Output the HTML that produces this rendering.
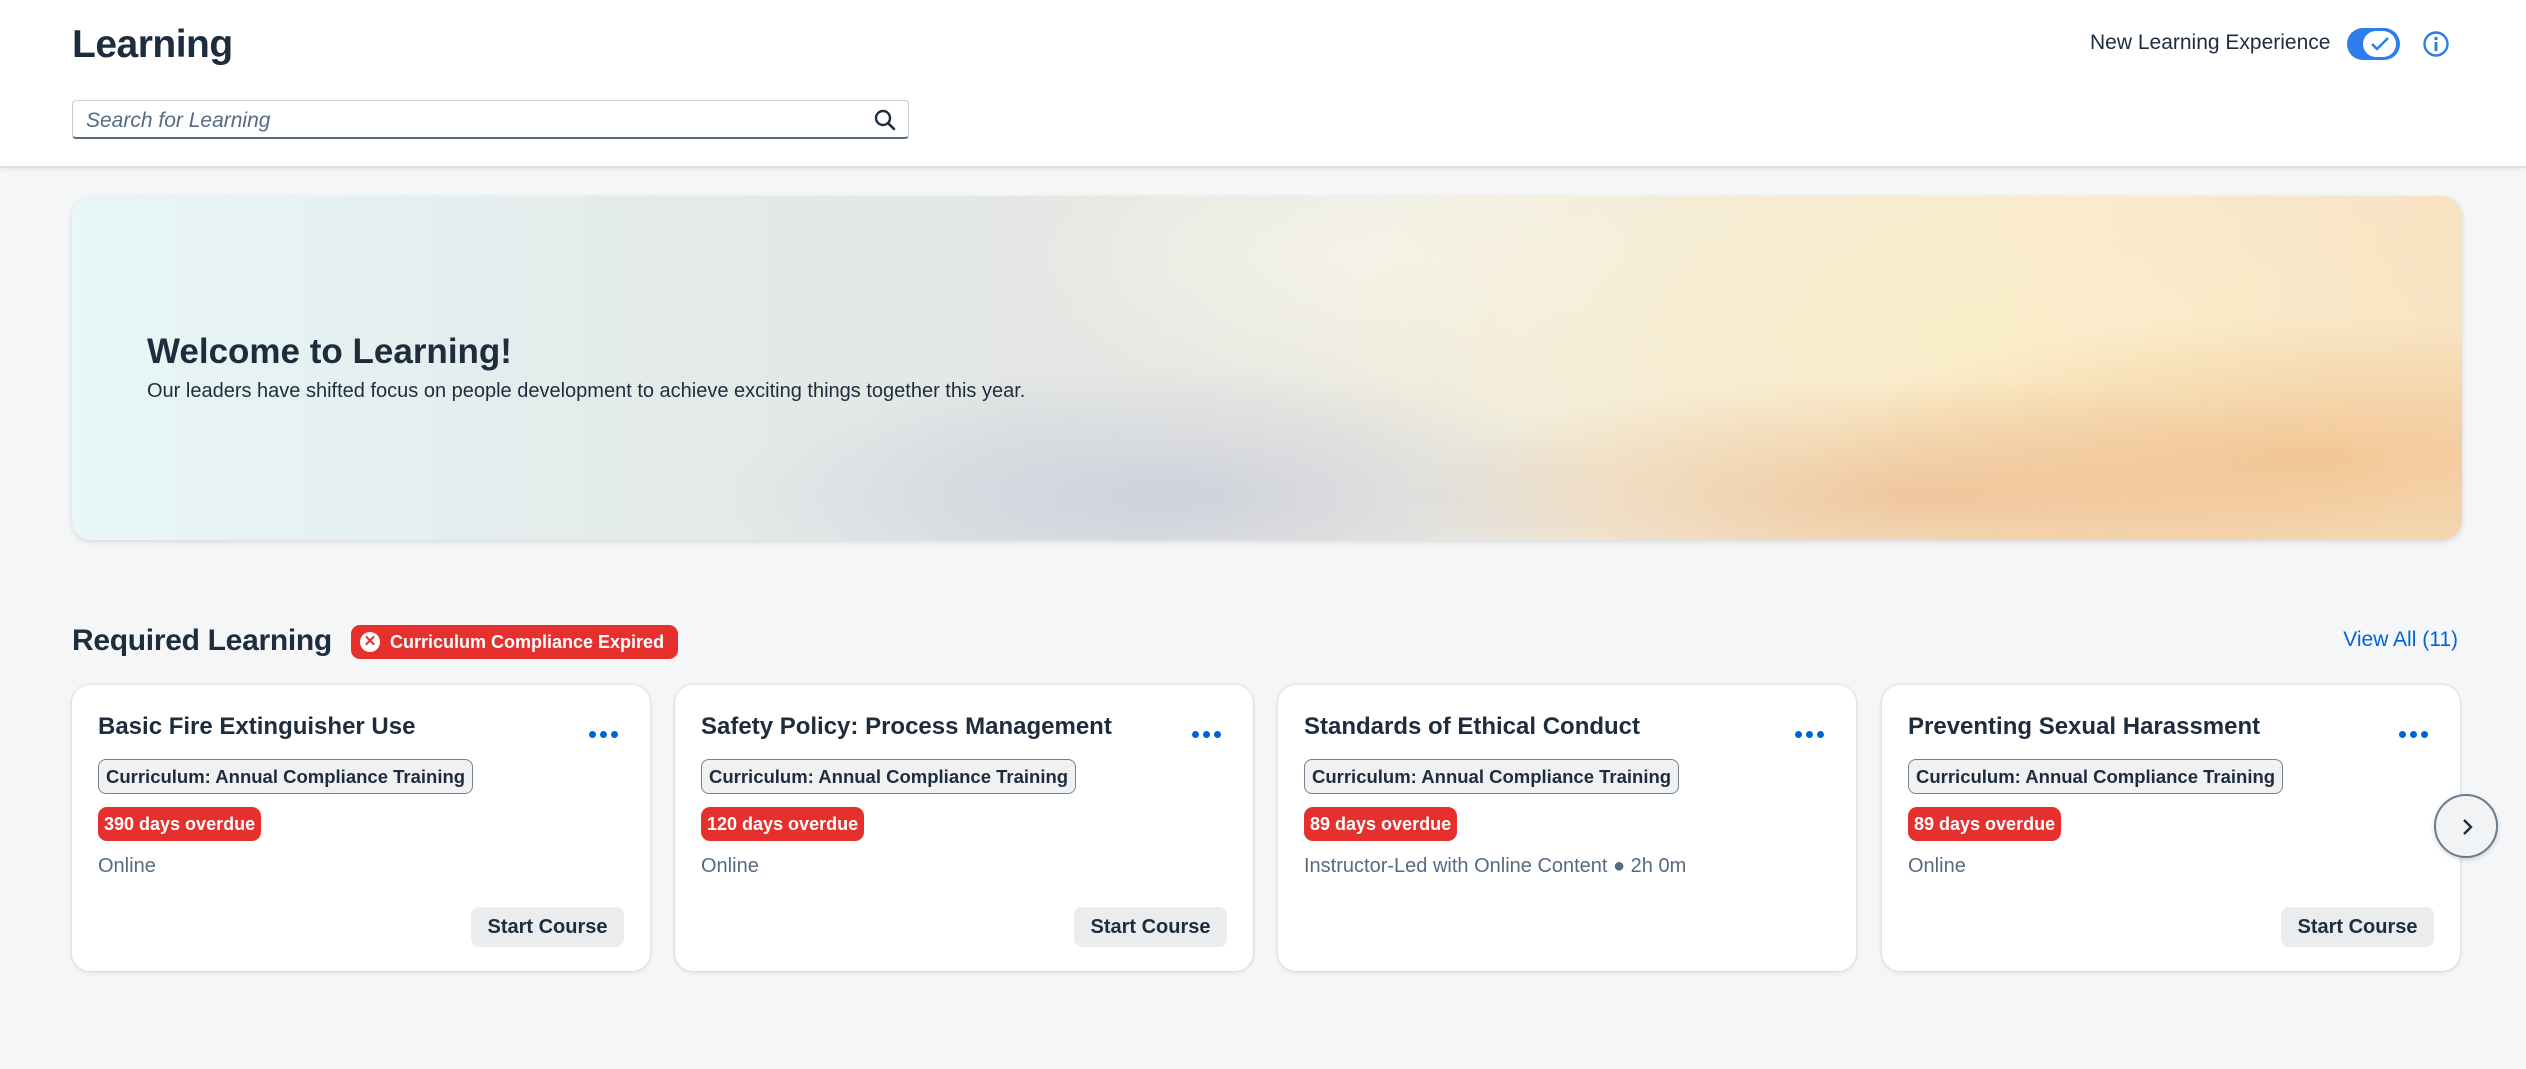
<!DOCTYPE html>
<html><head><meta charset="utf-8"><style>
*{box-sizing:border-box;margin:0;padding:0}
body{width:2526px;height:1069px;background:#f5f6f7;font-family:"Liberation Sans",sans-serif;color:#1d2d3e;position:relative;overflow:hidden}
.hdr{position:absolute;left:0;top:0;width:2526px;height:168px;background:#fff;border-bottom:2px solid #dfe1e3;box-shadow:0 2px 4px rgba(0,0,0,.05)}
.abs{position:absolute}
.title{left:72px;top:23px;font-size:39px;font-weight:bold;letter-spacing:-0.5px}
.search{left:72px;top:100px;width:837px;height:39px;border:1px solid #c8ccd1;border-bottom:2px solid #556b82;border-radius:4px;background:#fff}
.search span{position:absolute;left:13px;top:8px;font-size:21px;font-style:italic;color:#556b82}
.banner{left:72px;top:196px;width:2390px;height:344px;border-radius:20px;overflow:hidden;box-shadow:0 2px 6px rgba(0,0,0,.12);
background:
radial-gradient(ellipse 500px 120px at 1840px 300px,rgba(232,170,120,.55),transparent),
radial-gradient(ellipse 500px 140px at 2250px 260px,rgba(240,180,120,.6),transparent),
radial-gradient(ellipse 450px 130px at 1100px 300px,rgba(190,195,215,.6),transparent),
radial-gradient(ellipse 700px 260px at 1900px 140px,rgba(252,238,200,.8),transparent),
radial-gradient(ellipse 400px 150px at 1300px 60px,rgba(248,246,236,.7),transparent),
linear-gradient(90deg,#e9f7f7 0%,#e4ecec 20%,#e3e6e4 40%,#efece0 60%,#f8ecd2 80%,#f6e0c0 100%)}
.wt{left:75px;top:136px;font-size:35px;font-weight:bold}
.ws{left:75px;top:184px;font-size:20px}
.rl{left:72px;top:624px;font-size:30px;font-weight:bold;letter-spacing:-0.3px}
.badge{left:351px;top:625px;width:327px;height:34px;background:#e5302d;border-radius:9px;color:#fff;font-size:18px;font-weight:bold;padding:7px 0 0 39px}
.badge i{position:absolute;left:9px;top:7px;width:20px;height:20px;border-radius:50%;background:#fff;color:#e5302d;font-style:normal;font-size:15px;text-align:center;line-height:20px}
.va{right:68px;top:628px;font-size:21px;color:#0064d9}
.card{position:absolute;top:685px;width:578px;height:286px;background:#fff;border-radius:18px;box-shadow:0 0 3px rgba(0,0,0,.15),0 2px 6px rgba(0,0,0,.06)}
.ct{position:absolute;left:26px;top:28px;font-size:24px;font-weight:bold}
.dots{position:absolute;left:517px;top:40px;width:40px;height:8px;white-space:nowrap}
.dots b{display:inline-block;width:7px;height:7px;border-radius:50%;background:#0064d9;margin-right:4px}
.tag{position:absolute;left:26px;top:74px;height:35px;border:1px solid #76828e;border-radius:8px;background:#eff1f2;font-size:18.5px;font-weight:bold;padding:6px 7px 0 7px;white-space:nowrap}
.od{position:absolute;left:26px;top:122px;height:34px;background:#e5302d;border-radius:9px;color:#fff;font-size:18px;font-weight:bold;padding:7px 6px 0 6px}
.on{position:absolute;left:26px;top:170px;font-size:20px;color:#556b82}
.btn{position:absolute;right:26px;top:222px;width:153px;height:40px;background:#eaecee;border-radius:8px;font-size:20px;font-weight:bold;text-align:center;line-height:40px}
.next{left:2434px;top:794px;width:64px;height:64px;border-radius:50%;background:#f2f3f4;border:2px solid #6a7b8c;box-shadow:0 2px 5px rgba(0,0,0,.15)}
</style></head><body>
<div class="hdr">
<div class="abs title">Learning</div>
<div class="abs search"><span>Search for Learning</span>
<svg class="abs" style="right:12px;top:8px" width="22" height="22" viewBox="0 0 22 22"><circle cx="9" cy="9" r="7" fill="none" stroke="#1d2d3e" stroke-width="2.4"/><path d="M14 14l6 6" stroke="#1d2d3e" stroke-width="2.6" stroke-linecap="round"/></svg></div>
<div class="abs" style="left:2090px;top:31px;font-size:21px">New Learning Experience</div>
<div class="abs" style="left:2347px;top:28px;width:53px;height:32px;border-radius:16px;background:#2e7ded">
<div class="abs" style="left:16px;top:3px;width:33px;height:26px;border-radius:13px;background:#fff"></div>
<svg class="abs" style="left:22px;top:7px" width="22" height="18" viewBox="0 0 22 18"><path d="M3 9l5 5L19 3" fill="none" stroke="#2e7ded" stroke-width="2.4"/></svg></div>
<svg class="abs" style="left:2422px;top:30px" width="28" height="28" viewBox="0 0 28 28"><circle cx="14" cy="14" r="11.5" fill="none" stroke="#2e7ded" stroke-width="2.4"/><circle cx="14" cy="8.5" r="1.8" fill="#2e7ded"/><rect x="12.5" y="12" width="3" height="9" fill="#2e7ded"/></svg>
</div>
<div class="abs banner"><div class="abs wt">Welcome to Learning!</div><div class="abs ws">Our leaders have shifted focus on people development to achieve exciting things together this year.</div></div>
<div class="abs rl">Required Learning</div>
<div class="abs badge"><i>✕</i>Curriculum Compliance Expired</div>
<div class="abs va">View All (11)</div>

<div class="card" style="left:72px"><div class="ct">Basic Fire Extinguisher Use</div><div class="dots"><b></b><b></b><b></b></div><div class="tag">Curriculum: Annual Compliance Training</div><div class="od">390 days overdue</div><div class="on">Online</div><div class="btn">Start Course</div></div>
<div class="card" style="left:675px"><div class="ct">Safety Policy: Process Management</div><div class="dots"><b></b><b></b><b></b></div><div class="tag">Curriculum: Annual Compliance Training</div><div class="od">120 days overdue</div><div class="on">Online</div><div class="btn">Start Course</div></div>
<div class="card" style="left:1278px"><div class="ct">Standards of Ethical Conduct</div><div class="dots"><b></b><b></b><b></b></div><div class="tag">Curriculum: Annual Compliance Training</div><div class="od">89 days overdue</div><div class="on">Instructor-Led with Online Content ● 2h 0m</div></div>
<div class="card" style="left:1882px"><div class="ct">Preventing Sexual Harassment</div><div class="dots"><b></b><b></b><b></b></div><div class="tag">Curriculum: Annual Compliance Training</div><div class="od">89 days overdue</div><div class="on">Online</div><div class="btn">Start Course</div></div>
<div class="abs next"><svg class="abs" style="left:22px;top:20px" width="18" height="22" viewBox="0 0 18 22"><path d="M6 4l7 7-7 7" fill="none" stroke="#1d2d3e" stroke-width="2.4"/></svg></div>
</body></html>
